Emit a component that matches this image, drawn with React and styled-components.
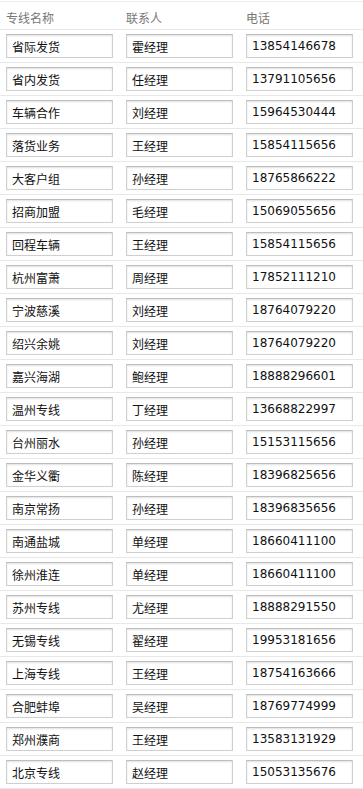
import React from "react";
import styled, { createGlobalStyle } from "styled-components";

const Global = createGlobalStyle`
  html, body { margin: 0; padding: 0; background: #fff; }
  body { font-family: "Noto Sans CJK SC", "DejaVu Sans", sans-serif; }
`;

const Table = styled.div`
  width: 363px;
  margin-top: 1px;
  border-top: 1px solid #ececec;
`;

const HeaderRow = styled.div`
  display: grid;
  grid-template-columns: 120px 120px 123px;
  height: 27px;
  align-items: center;
`;

const HeadCell = styled.div`
  padding-left: 6px;
  padding-top: 3px;
  font-size: 12px;
  color: #777;
  font-family: "Noto Sans CJK SC", sans-serif;
`;

const Row = styled.div`
  display: grid;
  grid-template-columns: 120px 120px 123px;
  border-top: 1px solid #e8e8e8;
  padding: 4px 0;
  &:last-child { border-bottom: 1px solid #e8e8e8; }
`;

const Cell = styled.div`
  padding-left: 6px;
`;

const Field = styled.div`
  box-sizing: border-box;
  width: 107px;
  height: 24px;
  border: 1px solid #cfcfcf;
  border-top-color: #bdbdbd;
  box-shadow: inset 0 1px 2px rgba(0, 0, 0, 0.12);
  padding-left: ${(p) => (p.$num ? "5px" : "5px")};
  display: flex;
  align-items: center;
  font-size: 12px;
  color: #111;
  font-family: ${(p) =>
    p.$num ? '"DejaVu Sans", sans-serif' : '"Noto Sans CJK SC", sans-serif'};
  white-space: nowrap;
  overflow: hidden;
`;

const data = [
  ["省际发货", "霍经理", "13854146678"],
  ["省内发货", "任经理", "13791105656"],
  ["车辆合作", "刘经理", "15964530444"],
  ["落货业务", "王经理", "15854115656"],
  ["大客户组", "孙经理", "18765866222"],
  ["招商加盟", "毛经理", "15069055656"],
  ["回程车辆", "王经理", "15854115656"],
  ["杭州富萧", "周经理", "17852111210"],
  ["宁波慈溪", "刘经理", "18764079220"],
  ["绍兴余姚", "刘经理", "18764079220"],
  ["嘉兴海湖", "鲍经理", "18888296601"],
  ["温州专线", "丁经理", "13668822997"],
  ["台州丽水", "孙经理", "15153115656"],
  ["金华义衢", "陈经理", "18396825656"],
  ["南京常扬", "孙经理", "18396835656"],
  ["南通盐城", "单经理", "18660411100"],
  ["徐州淮连", "单经理", "18660411100"],
  ["苏州专线", "尤经理", "18888291550"],
  ["无锡专线", "翟经理", "19953181656"],
  ["上海专线", "王经理", "18754163666"],
  ["合肥蚌埠", "吴经理", "18769774999"],
  ["郑州濮商", "王经理", "13583131929"],
  ["北京专线", "赵经理", "15053135676"],
];

export default function App() {
  return (
    <>
      <Global />
      <Table>
        <HeaderRow>
          <HeadCell>专线名称</HeadCell>
          <HeadCell>联系人</HeadCell>
          <HeadCell>电话</HeadCell>
        </HeaderRow>
        {data.map(([name, person, phone], i) => (
          <Row key={i}>
            <Cell>
              <Field>{name}</Field>
            </Cell>
            <Cell>
              <Field>{person}</Field>
            </Cell>
            <Cell>
              <Field $num>{phone}</Field>
            </Cell>
          </Row>
        ))}
      </Table>
    </>
  );
}
